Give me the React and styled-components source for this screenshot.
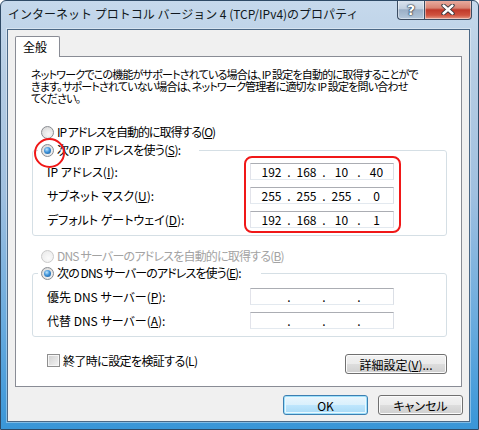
import React from "react";
import styled, { createGlobalStyle, css } from "styled-components";

const GlobalStyle = createGlobalStyle`
  html, body {
    margin: 0;
    padding: 0;
    background: #ffffff;
  }
  * {
    box-sizing: border-box;
  }
`;

const uiFont = `"Noto Sans CJK JP", "Noto Sans", sans-serif`;

const Window = styled.div`
  width: 479px;
  height: 430px;
  border: 1px solid #2f4a66;
  border-radius: 6px 6px 0 0;
  background: linear-gradient(
    180deg,
    #c6d9ec 0%,
    #b5cce3 18%,
    #a0c0e0 45%,
    #6aabde 75%,
    #3996d8 100%
  );
  padding: 0 8px 7px 6px;
  display: flex;
  flex-direction: column;
  font-family: ${uiFont};
  font-size: 12px;
  color: #000;
  overflow: hidden;
`;

const TitleBar = styled.div`
  height: 28px;
  display: flex;
  align-items: flex-start;
`;

const Title = styled.div`
  flex: 1;
  padding: 6px 0 0 1px;
  line-height: 14px;
  white-space: nowrap;
  color: #101820;
`;

const CaptionButtons = styled.div`
  display: flex;
  margin: -1px -2px 0 0;
`;

const CaptionButton = styled.div`
  width: ${(p) => p.$w}px;
  height: 20px;
  border: 1px solid #3a4c62;
  border-top: none;
  display: flex;
  align-items: center;
  justify-content: center;
  box-shadow: inset 0 0 0 1px rgba(255, 255, 255, 0.45);
  background: linear-gradient(180deg, #dde6f0 0%, #c2d0e0 45%, #9aafc6 52%, #b3c7db 100%);
  border-radius: 0 0 0 4px;
  border-right: none;
  color: #fff;
  font-family: "DejaVu Sans", sans-serif;
  font-weight: bold;
  font-size: 14px;
  text-shadow: 0 0 1px #1d2a3a, 0 0 1px #1d2a3a, 0 0 2px #1d2a3a;

  ${(p) =>
    p.$close &&
    css`
      border-radius: 0 0 4px 0;
      border-right: 1px solid #3a4c62;
      background: linear-gradient(180deg, #eab0a4 0%, #d98473 42%, #c0392a 52%, #d0533f 80%, #e59a86 100%);
    `}
`;

const Client = styled.div`
  flex: 1;
  background: #f0f0f0;
  border: 1px solid #4b6886;
  box-shadow: 0 0 0 1px rgba(255, 255, 255, 0.35);
  padding: 6px 7px 6px 7px;
  display: flex;
  flex-direction: column;
`;

const TabStrip = styled.div`
  display: flex;
  height: 21px;
  margin-bottom: -1px;
  position: relative;
  z-index: 1;
`;

const Tab = styled.div`
  width: 45px;
  height: 21px;
  border: 1px solid #898c95;
  border-bottom: none;
  border-radius: 2px 2px 0 0;
  background: #ffffff;
  padding: 3px 0 0 7px;
  line-height: 14px;
`;

const Panel = styled.div`
  border: 1px solid #898c95;
  background: #ffffff;
  padding: 11px 14px 12px 16px;
  display: flex;
  flex-direction: column;
  font-feature-settings: "palt";
`;

const Description = styled.p`
  margin: 0 0 21px -1px;
  font-size: 11px;
  letter-spacing: -0.8px;
  line-height: 12px;
  white-space: nowrap;
`;

const OptionRow = styled.label`
  display: flex;
  align-items: center;
  gap: 3px;
  height: 14px;
  line-height: 14px;
  white-space: nowrap;
  margin-left: ${(p) => p.$indent || 0}px;
  margin-bottom: ${(p) => p.$after || 0}px;
  color: ${(p) => (p.$disabled ? "#a3a3a3" : "#000")};
`;

const OptionText = styled.span`
  letter-spacing: ${(p) => p.$tight || 0}px;
`;

const Radio = styled.span`
  position: relative;
  flex: none;
  width: 13px;
  height: 13px;
  border-radius: 50%;
  border: 1px solid ${(p) => (p.$disabled ? "#cacaca" : "#8a8d92")};
  background: radial-gradient(circle at 60% 65%, #f7f7f7 0%, #e4e4e4 55%, #cfcfcf 100%);

  ${(p) =>
    p.$disabled &&
    css`
      background: radial-gradient(circle at 60% 65%, #fafafa 0%, #efefef 60%, #e6e6e6 100%);
    `}

  ${(p) =>
    p.$checked &&
    css`
      &::before {
        content: "";
        position: absolute;
        left: 2px;
        top: 2px;
        width: 7px;
        height: 7px;
        border-radius: 50%;
        background: radial-gradient(circle at 40% 35%, #bfe6fc 0%, #3f93da 45%, #14548f 100%);
      }
    `}

  ${(p) =>
    p.$marked &&
    css`
      &::after {
        content: "";
        position: absolute;
        left: -8px;
        top: -7px;
        width: 27px;
        height: 26px;
        border: 2px solid #f01818;
        border-radius: 50%;
      }
    `}
`;

const Group = styled.fieldset`
  margin: 0 0 ${(p) => p.$after || 0}px 0;
  min-width: 0;
  border: 1px solid #d5dfe5;
  border-radius: 3px;
  padding: ${(p) => p.$top}px 52px 7px 14px;
`;

const Legend = styled.legend`
  padding: 0 ${(p) => p.$tail || 3}px 0 3px;
  margin-left: -9px;
`;

const FieldGrid = styled.div`
  display: grid;
  grid-template-columns: 1fr 144px;
`;

const Column = styled.div`
  display: flex;
  flex-direction: column;
  gap: 7px;
  position: relative;

  ${(p) =>
    p.$marked &&
    css`
      &::after {
        content: "";
        position: absolute;
        left: -6px;
        right: -7px;
        top: -7px;
        bottom: -5px;
        border: 2px solid #f01818;
        border-radius: 8px;
      }
    `}
`;

const FieldLabel = styled.div`
  height: 17px;
  line-height: 17px;
  white-space: nowrap;
`;

const IpBox = styled.div`
  height: 17px;
  border: 1px solid;
  border-color: #abadb3 #dbdfe6 #e3e9ef #e2e3ea;
  background: #ffffff;
  display: grid;
  grid-template-columns: 1fr 4px 1fr 4px 1fr 4px 1fr;
  padding: 0 1px 0 5px;
  align-items: center;
  line-height: 15px;
  font-feature-settings: normal;
`;

const Cell = styled.span`
  text-align: center;
`;

const BottomRow = styled.div`
  display: flex;
  justify-content: space-between;
  align-items: flex-start;
  margin-top: 17px;
`;

const CheckOption = styled.label`
  display: flex;
  align-items: center;
  gap: 3px;
  height: 14px;
  margin: -1px 0 0 15px;
  white-space: nowrap;
  letter-spacing: -0.6px;
`;

const Checkbox = styled.span`
  flex: none;
  width: 13px;
  height: 13px;
  border: 1px solid #8f8f8f;
  background: linear-gradient(135deg, #cfcfcf 0%, #f4f4f4 100%);
  box-shadow: inset 0 0 0 1px #f6f6f6;
`;

const Button = styled.button`
  width: ${(p) => p.$w}px;
  height: 20px;
  padding: 0;
  font-family: ${uiFont};
  font-size: 12px;
  font-feature-settings: "palt";
  color: #000;
  border: 1px solid #707070;
  border-radius: 3px;
  background: linear-gradient(180deg, #f2f2f2 0%, #ebebeb 50%, #dddddd 51%, #cfcfcf 100%);
  box-shadow: inset 0 0 0 1px #fbfbfb;

  ${(p) =>
    p.$default &&
    css`
      border-color: #3c7fb1;
      background: linear-gradient(180deg, #eaf6fd 0%, #d9f0fc 50%, #bee6fd 51%, #a7d9f5 100%);
      box-shadow: inset 0 0 0 1px #9ee0fb, inset 0 0 0 2px #e9f7fe;
    `}
`;

const Footer = styled.div`
  display: flex;
  justify-content: flex-end;
  gap: 10px;
  margin: 8px -1px 0 0;
`;

const CloseGlyph = () => (
  <svg width="14" height="11" viewBox="0 0 14 11">
    <path d="M2.5 1.5 L11.5 9.5 M11.5 1.5 L2.5 9.5" stroke="#2a2f36" strokeWidth="4.2" strokeLinecap="round" />
    <path d="M2.5 1.5 L11.5 9.5 M11.5 1.5 L2.5 9.5" stroke="#ffffff" strokeWidth="2.4" strokeLinecap="round" />
  </svg>
);

const Option = ({ checked, disabled, marked, indent, after, tight, children }) => (
  <OptionRow $indent={indent} $after={after} $disabled={disabled}>
    <Radio $checked={checked} $disabled={disabled} $marked={marked} />
    <OptionText $tight={tight}>{children}</OptionText>
  </OptionRow>
);

const IpField = ({ value }) => {
  const parts = value || ["", "", "", ""];
  return (
    <IpBox>
      <Cell>{parts[0]}</Cell>
      <Cell>.</Cell>
      <Cell>{parts[1]}</Cell>
      <Cell>.</Cell>
      <Cell>{parts[2]}</Cell>
      <Cell>.</Cell>
      <Cell>{parts[3]}</Cell>
    </IpBox>
  );
};

export default function App() {
  return (
    <>
      <GlobalStyle />
      <Window>
        <TitleBar>
          <Title>インターネット プロトコル バージョン 4 (TCP/IPv4)のプロパティ</Title>
          <CaptionButtons>
            <CaptionButton $w={27}>?</CaptionButton>
            <CaptionButton $w={48} $close>
              <CloseGlyph />
            </CaptionButton>
          </CaptionButtons>
        </TitleBar>
        <Client>
          <TabStrip>
            <Tab>全般</Tab>
          </TabStrip>
          <Panel>
            <Description>
              ネットワークでこの機能がサポートされている場合は、IP 設定を自動的に取得することがで
              <br />
              きます。サポートされていない場合は、ネットワーク管理者に適切な IP 設定を問い合わせ
              <br />
              てください。
            </Description>

            <Option indent={9} after={4} tight={-1}>
              IP アドレスを自動的に取得する(<u>O</u>)
            </Option>

            <Group $top={6} $after={13}>
              <Legend $tail={18}>
                <Option checked marked tight={-0.6}>
                  次の IP アドレスを使う(<u>S</u>):
                </Option>
              </Legend>
              <FieldGrid>
                <Column>
                  <FieldLabel>IP アドレス(<u>I</u>):</FieldLabel>
                  <FieldLabel>サブネット マスク(<u>U</u>):</FieldLabel>
                  <FieldLabel>デフォルト ゲートウェイ(<u>D</u>):</FieldLabel>
                </Column>
                <Column $marked>
                  <IpField value={["192", "168", "10", "40"]} />
                  <IpField value={["255", "255", "255", "0"]} />
                  <IpField value={["192", "168", "10", "1"]} />
                </Column>
              </FieldGrid>
            </Group>

            <Option indent={9} after={3} disabled tight={-0.8}>
              DNS サーバーのアドレスを自動的に取得する(<u>B</u>)
            </Option>

            <Group $top={8}>
              <Legend $tail={20}>
                <Option checked tight={-0.9}>
                  次の DNS サーバーのアドレスを使う(<u>E</u>):
                </Option>
              </Legend>
              <FieldGrid>
                <Column>
                  <FieldLabel>優先 DNS サーバー(<u>P</u>):</FieldLabel>
                  <FieldLabel>代替 DNS サーバー(<u>A</u>):</FieldLabel>
                </Column>
                <Column>
                  <IpField />
                  <IpField />
                </Column>
              </FieldGrid>
            </Group>

            <BottomRow>
              <CheckOption>
                <Checkbox />
                終了時に設定を検証する(L)
              </CheckOption>
              <Button $w={102}>
                詳細設定(<u>V</u>)...
              </Button>
            </BottomRow>
          </Panel>
          <Footer>
            <Button $w={85} $default>
              OK
            </Button>
            <Button $w={85}>キャンセル</Button>
          </Footer>
        </Client>
      </Window>
    </>
  );
}
